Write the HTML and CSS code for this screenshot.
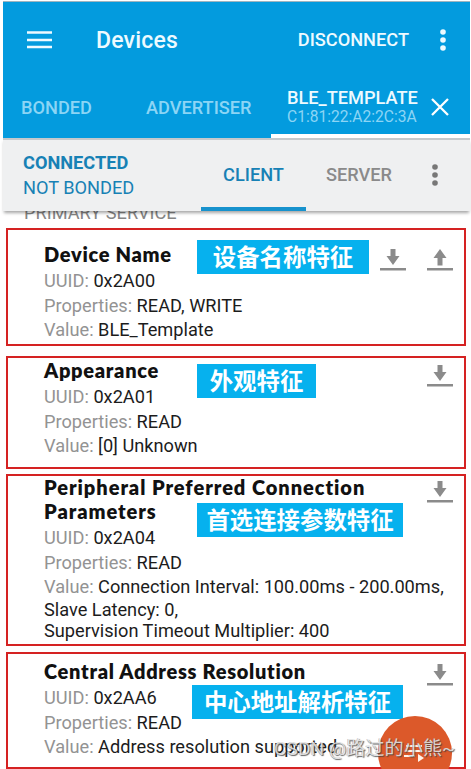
FILE: index.html
```
<!DOCTYPE html>
<html lang="en">
<head>
    <meta charset="UTF-8">
    <meta name="viewport" content="width=device-width, initial-scale=1.0">
    <title>Devices</title>
    <link rel="stylesheet" href="styles.css">
</head>
<body>
    <svg class="defs" width="0" height="0">
        <symbol id="read" viewBox="0 0 26 24">
            <path d="M10.5 1h5v7h4L13 17 6.500 8h4z"/>
            <path d="M0 20h26v2.500H0z"/>
        </symbol>
        <symbol id="write" viewBox="0 0 26 24">
            <path d="M10.500 17.500h5v-7.500h4L13 1 6.500 10h4z"/>
            <path d="M0 20h26v2.500H0z"/>
        </symbol>
        <symbol id="dots" viewBox="0 0 6 22">
            <circle cx="3" cy="3" r="2.800"/>
            <circle cx="3" cy="11" r="2.800"/>
            <circle cx="3" cy="19" r="2.800"/>
        </symbol>
    </svg>
    <div class="screen">
        <header>
            <div class="toolbar">
                <svg class="menu" viewBox="0 0 25 18"><path d="M0 1.500h25M0 9h25M0 16h25"/></svg>
                <h1>Devices</h1>
                <span class="disconnect">DISCONNECT</span>
                <svg class="dots"><use href="#dots"/></svg>
            </div>
            <nav class="tabs">
                <div class="tab bonded">BONDED</div>
                <div class="tab advertiser">ADVERTISER</div>
                <div class="tab device">
                    <div>
                        <div class="device-name">BLE_TEMPLATE</div>
                        <div class="address">C1:81:22:A2:2C:3A</div>
                    </div>
                    <svg class="close" viewBox="0 0 18 18"><path d="M1 1l16 16M17 1L1 17"/></svg>
                </div>
            </nav>
        </header>
        <div class="status-bar">
            <div class="status">
                <div class="connected">CONNECTED</div>
                <div class="not-bonded">NOT BONDED</div>
            </div>
            <div class="client">CLIENT</div>
            <div class="server">SERVER</div>
            <svg class="dots grey"><use href="#dots"/></svg>
        </div>
        <main>
            <div class="primary"><span>PRIMARY SERVICE</span></div>

            <section class="card name">
                <h2>Device Name</h2>
                <p><span>UUID:</span> 0x2A00</p>
                <p><span>Properties:</span> READ, WRITE</p>
                <p><span>Value:</span> BLE_Template</p>
                <div class="tag">设备名称特征</div>
                <div class="actions">
                    <svg><use href="#read"/></svg>
                    <svg><use href="#write"/></svg>
                </div>
            </section>

            <section class="card appearance">
                <h2>Appearance</h2>
                <p><span>UUID:</span> 0x2A01</p>
                <p><span>Properties:</span> READ</p>
                <p><span>Value:</span> [0] Unknown</p>
                <div class="tag">外观特征</div>
                <div class="actions"><svg><use href="#read"/></svg></div>
            </section>

            <section class="card connection">
                <h2>Peripheral Preferred Connection<br>Parameters</h2>
                <p><span>UUID:</span> 0x2A04</p>
                <p><span>Properties:</span> READ</p>
                <p><span>Value:</span> Connection Interval: 100.00ms - 200.00ms,</p>
                <p class="more">Slave Latency: 0,<br>Supervision Timeout Multiplier: 400</p>
                <div class="tag">首选连接参数特征</div>
                <div class="actions"><svg><use href="#read"/></svg></div>
            </section>

            <section class="card resolution">
                <h2>Central Address Resolution</h2>
                <p><span>UUID:</span> 0x2AA6</p>
                <p><span>Properties:</span> READ</p>
                <p><span>Value:</span> Address resolution supported</p>
                <div class="tag">中心地址解析特征</div>
                <div class="actions"><svg><use href="#read"/></svg></div>
            </section>
        </main>
        <div class="fab">
            <svg viewBox="0 0 22 20">
                <path class="lines" d="M2 3h16M2 8h16M0 13h11"/>
                <path d="M14 11v8l6-4z"/>
            </svg>
        </div>
        <div class="watermark">CSDN @路过的小熊~</div>
    </div>
</body>
</html>
```
FILE: styles.css
```
* {
    box-sizing: border-box;
}
body {
    margin: 0;
    background: white;
    font-family: Roboto, "Noto Sans CJK SC", sans-serif;
    font-size: 18.2px;
    color: #1c1c1c;
}
h1, h2, p {
    margin: 0;
}
svg {
    display: block;
    flex: none;
}
.defs {
    position: absolute;
}
.screen {
    position: relative;
    height: 769px;
    padding: 1px 1px 0 3px;
    overflow: hidden;
}
header {
    height: 137px;
    background: #039bde;
    border-top: 1px solid #9fb4bf;
    color: #eefaff;
}
.toolbar {
    display: flex;
    align-items: center;
    height: 75px;
    padding: 0 24px 0 24px;
}
.menu {
    width: 25px;
    height: 18px;
    margin-right: 44px;
    stroke: #eefaff;
    stroke-width: 2.6;
}
h1 {
    padding-top: 2px;
    font-size: 23px;
    font-weight: 500;
    letter-spacing: 0.2px;
    flex: 1;
}
.disconnect {
    font-weight: 500;
    margin-right: 31px;
}
.dots {
    width: 6px;
    height: 22px;
    fill: #eefaff;
}
.tabs {
    display: flex;
    height: 61px;
}
.tab {
    display: flex;
    align-items: center;
    font-weight: 500;
    color: #8cd5f5;
}
.bonded {
    width: 126px;
    padding-left: 18px;
}
.advertiser {
    width: 142px;
    padding-left: 17px;
}
.device {
    flex: 1;
    justify-content: space-between;
    padding: 3px 21px 0 16px;
    border-bottom: 4px solid white;
    color: #eefaff;
}
.device-name {
    line-height: 20px;
}
.address {
    font-size: 15.6px;
    font-weight: 400;
    line-height: 18px;
    color: #8cd5f5;
}
.close {
    width: 18px;
    height: 18px;
    stroke: white;
    stroke-width: 2.3;
}
.status-bar {
    position: relative;
    display: flex;
    align-items: center;
    height: 73px;
    padding: 0 32px 0 20px;
    background: #eff0f1;
    border-top: 2px solid #c5c9cc;
    box-shadow: 0 3px 3px -1px rgba(0, 0, 0, 0.35);
}
.status {
    width: 178px;
    margin-top: -2px;
    line-height: 25px;
    color: #1781b5;
}
.connected {
    font-weight: 700;
}
.client {
    display: flex;
    align-items: center;
    justify-content: center;
    align-self: stretch;
    width: 105px;
    padding-top: 2px;
    border-bottom: 4px solid #1792cd;
    font-weight: 500;
    color: #1781b5;
}
.server {
    flex: 1;
    padding-left: 20px;
    margin-top: -2px;
    font-weight: 500;
    color: #8a8a8a;
}
.grey {
    margin-top: -2px;
    fill: #777;
}
.primary {
    height: 17px;
    overflow: hidden;
    padding-left: 21px;
    line-height: 21px;
    color: #858585;
}
.primary span {
    display: block;
    margin-top: -9px;
}
.card {
    position: relative;
    width: 460px;
    margin-left: 3px;
    padding-left: 36px;
    border: 2px solid #d52222;
}
.name {
    height: 118px;
    padding-top: 12px;
    margin-bottom: 10px;
}
.appearance {
    height: 113px;
    margin-bottom: 5px;
}
.connection {
    height: 172px;
    margin-bottom: 6px;
}
.connection h2 {
    margin-top: -1px;
    letter-spacing: 0.95px;
}
.resolution {
    height: 117px;
    padding-top: 5px;
}
h2 {
    font-family: Lato, sans-serif;
    font-size: 20px;
    font-weight: 800;
    line-height: 24px;
    margin-bottom: 3px;
    letter-spacing: 0.7px;
    color: #111;
}
p {
    line-height: 24.6px;
    white-space: nowrap;
}
p span {
    color: #939393;
}
.more {
    margin-top: -1px;
    line-height: 21.3px;
}
.tag {
    position: absolute;
    left: 189px;
    top: 10px;
    height: 34px;
    width: 172px;
    text-align: center;
    background: #06b1ee;
    color: white;
    font: 700 23.4px/33px "Noto Sans CJK SC", sans-serif;
}
.appearance .tag {
    top: 6px;
    width: 119px;
}
.connection .tag {
    top: 27px;
    width: 206px;
}
.resolution .tag {
    left: 184px;
    top: 31px;
    width: 211px;
}
.actions {
    position: absolute;
    right: 11px;
    top: 18px;
    display: flex;
    gap: 21px;
    fill: #8b8b8b;
}
.actions svg {
    width: 26px;
    height: 24px;
}
.appearance .actions {
    top: 6px;
}
.connection .actions {
    top: 4px;
}
.resolution .actions {
    top: 9px;
}
.fab {
    position: absolute;
    left: 378px;
    top: 716px;
    width: 74px;
    height: 74px;
    border-radius: 50%;
    background: #dc592a;
}
.fab svg {
    width: 22px;
    height: 20px;
    margin: 27px 0 0 26px;
    fill: #fff3ea;
}
.lines {
    stroke: #fff3ea;
    stroke-width: 2;
}
.watermark {
    position: absolute;
    left: 274px;
    top: 735px;
    font-size: 19.2px;
    line-height: 28px;
    white-space: nowrap;
    color: rgba(255, 255, 255, 0.75);
    text-shadow: 1px 1px 1px rgba(60, 60, 60, 0.8), -0.5px -0.5px 0 rgba(90, 90, 90, 0.5);
}
```
